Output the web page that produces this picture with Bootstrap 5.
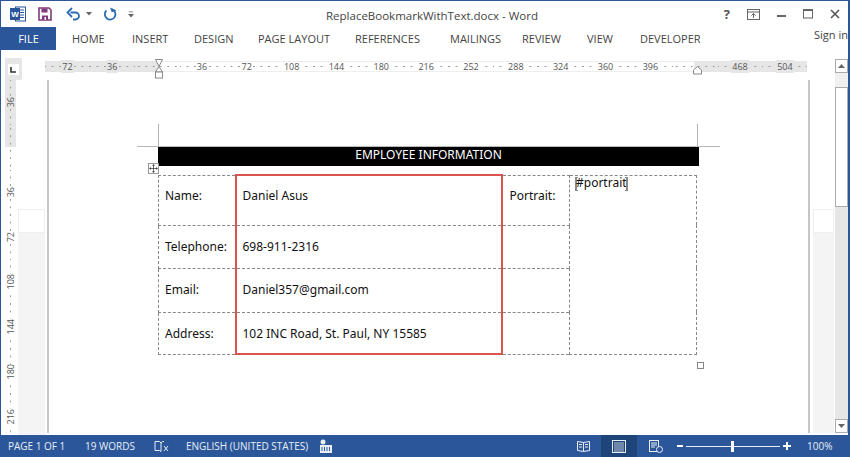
<!DOCTYPE html>
<html lang="en">

<head>
    <meta charset="UTF-8">
    <meta name="viewport" content="width=device-width, initial-scale=1.0">
    <title>ReplaceBookmarkWithText.docx - Word</title>
    <link href="https://cdn.jsdelivr.net/npm/bootstrap@5.3.0/dist/css/bootstrap.min.css" rel="stylesheet">
    <style>
        html, body { height: 100%; overflow: hidden; }

        body {
            background: #fff;
            font-family: "Open Sans", "Liberation Sans", sans-serif;
            color: #444;
        }

        .word-window {
            width: 850px;
            height: 457px;
            border: solid #2b579a;
            border-width: 1px 2px 0 1px;
        }

        /* title bar */
        .title-bar { height: 26px; }
        .qat { width: 160px; padding-left: 9px; }
        .qat-save { margin-left: 12px; }
        .qat-undo { margin-left: 14px; }
        .qat-arrow { margin-left: 5px; }
        .qat-redo { margin-left: 11px; }
        .qat-more { margin-left: 11px; }
        .doc-title { left: 325px; top: 7px; font-size: 11.5px; line-height: 16px; color: #444; }
        .win-btns { right: 8px; top: 6px; gap: 17px; }
        .help-btn { font-size: 13px; line-height: 14px; color: #555; }

        /* ribbon tabs */
        .ribbon-tabs { height: 23px; font-size: 11px; line-height: 23px; overflow: hidden; }
        .tab-file {
            width: 55px;
            flex: none;
            background: #2b579a;
            color: #fff;
            text-align: center;
        }
        .tab-item { color: #444; flex: none; }
        .tab-home { margin-left: 16px; width: 60px; }
        .tab-insert { width: 62px; }
        .tab-design { width: 64px; }
        .tab-layout { width: 97px; }
        .tab-refs { width: 95px; }
        .tab-mail { width: 72px; }
        .tab-review { width: 65px; }
        .tab-view { width: 53px; }
        .tab-dev { width: 174px; }
        .sign-in { font-size: 11px; line-height: 16px; white-space: nowrap; margin-top: 0; flex: none; }

        /* workspace */
        .workspace { height: 385px; }
        .left-col { width: 44px; }
        .corner-btn {
            width: 17px;
            height: 22px;
            margin: 8px 0 0 4px;
            background: #e6e6e6;
            flex: none;
        }
        .corner-btn i {
            width: 11px;
            height: 11px;
            background: #fff;
        }
        .v-wrap { height: 353px; }
        .v-ruler { width: 11px; margin-left: 4px; font-size: 9px; color: #555; }
        .v-strip { width: 27px; margin-left: 2px; }
        .v-strip-top, .r-strip-top { height: 129px; }
        .v-strip-mid, .r-strip-mid { height: 24px; border: 1px solid #eee; background: #fff; }
        .v-strip-rest, .r-strip-rest { flex: 1; background: #f4f4f4; }

        .ruler-h {
            height: 11px;
            margin-top: 11px;
            margin-bottom: 8px;
            font-size: 9px;
            line-height: 11px;
            color: #555;
        }
        .seg { display: flex; height: 11px; }
        .seg-off { background: #e6e6e6; }
        .seg-on { background: #fff; outline: 1px solid #eee; outline-offset: -1px; }
        .cell {
            width: 44.85px;
            flex: none;
            text-align: center;
            background-image: radial-gradient(circle, #9a9a9a 0.5px, transparent 0.9px);
            background-size: 7.475px 11px;
            background-position: center;
        }
        .half { width: 22.42px; background-position: right center; }
        .half-end { width: 22.42px; background-position: left center; }
        .seg-off .cell span { background: #e6e6e6; }
        .seg-on .cell span { background: #fff; }
        .cell span { padding: 0 1px; }
        .indent-left { left: 109px; top: -2px; }
        .indent-right { left: 648px; top: 5px; }

        .v-cell {
            height: 44.85px;
            flex: none;
            display: flex;
            align-items: center;
            justify-content: center;
            background-image: radial-gradient(circle, #9a9a9a 0.5px, transparent 0.9px);
            background-size: 11px 7.475px;
            background-position: center;
        }
        .v-half { height: 22.42px; background-position: center bottom; }
        .v-off { background-color: #e6e6e6; }
        .v-on { background-color: #fff; }
        .v-cell span {
            writing-mode: vertical-rl;
            transform: rotate(180deg);
            line-height: 11px;
            padding: 1px 0;
        }
        .v-off span { background-color: #e6e6e6; }
        .v-on span { background-color: #fff; }

        /* page */
        .page-row { height: 353px; }
        .page {
            width: 763px;
            margin-left: 2px;
            border-left: 2px solid #c6c6c6;
            border-right: 2px solid #c6c6c6;
            background: #fff;
            padding: 66px 0 0 109px;
        }
        .r-strip { width: 21px; margin-left: 3px; }
        .doc-area { width: 541px; }
        .crop { background: #b5b5b5; }
        .crop-v { width: 1px; height: 22px; top: -22px; }
        .crop-h { height: 1px; width: 21px; top: 0; }
        .doc-header {
            height: 20px;
            background: #000;
            color: #fff;
            font-family: "Noto Sans", "Open Sans", sans-serif;
            font-size: 12px;
            line-height: 16px;
            text-align: center;
            border-top: 1px solid #bbb;
        }
        .emp-table {
            width: 539px;
            height: 179px;
            margin-top: 8px;
            table-layout: fixed;
            border-collapse: collapse;
            font-family: "Noto Sans", "Open Sans", sans-serif;
            font-size: 12px;
            color: #111;
        }
        .emp-table td {
            border: 1px dashed #888;
            padding: 0 0 0 6px;
            vertical-align: middle;
            white-space: nowrap;
        }
        .emp-table td.val {
            border-left: 2px solid #d9534f;
            border-right: 2px solid #d9534f;
            padding-left: 6px;
        }
        .emp-table tr:first-child td.val { border-top: 2px solid #d9534f; }
        .emp-table tr:last-child td.val { border-bottom: 2px solid #d9534f; }
        .emp-table tr:first-child td:not(.portrait-cell) { padding-bottom: 9px; }
        .emp-table tr:last-child td { padding-top: 2px; }
        .emp-table td.portrait-cell { vertical-align: top; padding: 0 0 0 5px; line-height: 14px; }
        .emp-table td.portrait-label { padding-left: 7px; }
        .bm {
            display: inline-block;
            width: 3px;
            height: 14px;
            border: 2px solid #8a8a8a;
            border-width: 1px 0 1px 2px;
            vertical-align: -4px;
        }
        .bm-l { margin-right: -2px; }
        .bm-r { border-width: 1px 2px 1px 0; margin-left: -2px; }
        .move-handle {
            left: -10px;
            top: 17px;
            width: 11px;
            height: 11px;
            border: 1px solid #999;
            background: #fff;
        }
        .resize-handle {
            left: 539px;
            top: 216px;
            width: 7px;
            height: 7px;
            border: 1px solid #888;
            background: #fff;
        }

        /* scrollbar */
        .scroll-col { width: 14px; margin-left: 1px; }
        .sb-btn {
            height: 14px;
            background: #fff;
            border: 1px solid #ababab;
            flex: none;
        }
        .sb-up { margin-top: 9px; }
        .sb-gap { height: 14px; background: #f0f0f0; }
        .sb-thumb { height: 120px; background: #fff; border: 1px solid #ababab; }
        .sb-track { flex: 1; background: #e6e6e6; }
        .sb-down { margin-bottom: 2px; }

        /* status bar */
        .status-bar {
            height: 22px;
            background: #2b579a;
            color: #e9eef6;
            font-size: 10px;
            line-height: 22px;
            margin: 0 -2px 0 -1px;
        }
        .st-page { margin-left: 8px; width: 77px; }
        .st-words { width: 69px; }
        .st-lang { margin-left: 17px; width: 133px; }
        .view-active { width: 36px; background: #1e4479; margin: 0 12px 0 11px; }
        .zoom-group { margin-left: 14px; }
        .zoom-line { width: 94px; height: 1px; background: #e9eef6; margin: 0 3px; }
        .zoom-thumb { left: 45px; top: -5px; width: 3px; height: 11px; background: #fff; }
        .st-zoom { margin-left: 16px; width: 43px; }
    </style>
</head>

<body>
    <div class="word-window d-flex flex-column position-relative">
        <!-- title bar -->
        <div class="title-bar d-flex align-items-center position-relative">
            <div class="qat d-flex align-items-center">
                <svg width="16" height="16" viewBox="0 0 16 16">
                    <rect x="5.500" y="1" width="10" height="14" fill="#fff" stroke="#2b579a"/>
                    <path d="M9 4h5M9 6.500h5M9 9h5M9 11.500h5" stroke="#2b579a"/>
                    <rect x="0" y="2" width="10" height="12" fill="#2b579a"/>
                    <text x="5" y="11" font-size="8" font-weight="700" fill="#fff" text-anchor="middle" font-family="Liberation Sans">W</text>
                </svg>
                <svg class="qat-save" width="14" height="14" viewBox="0 0 14 14">
                    <path d="M1 1h10l2 2v10H1z" fill="#fff" stroke="#80397b" stroke-width="1.600"/>
                    <rect x="3.500" y="1.500" width="6" height="4" fill="#80397b"/>
                    <rect x="4" y="8.500" width="6" height="4.500" fill="#80397b"/>
                    <rect x="6.500" y="10" width="1.500" height="3" fill="#fff"/>
                </svg>
                <svg class="qat-undo" width="15" height="14" viewBox="0 0 15 14">
                    <path d="M4.500 5.500h5a3.500 3.500 0 0 1 0 7H7" fill="none" stroke="#2b6cb0" stroke-width="1.800"/>
                    <path d="M6 1 1.500 5.500 6 10" fill="none" stroke="#2b6cb0" stroke-width="1.800"/>
                </svg>
                <svg class="qat-arrow" width="6" height="4" viewBox="0 0 6 4"><path d="M0 0h6L3 3.500z" fill="#666"/></svg>
                <svg class="qat-redo" width="14" height="14" viewBox="0 0 14 14">
                    <path d="M9 2.300A5.300 5.300 0 1 1 3.400 3.500" fill="none" stroke="#2b6cb0" stroke-width="1.800"/>
                    <path d="M8 0v5h5z" fill="#2b6cb0" transform="rotate(-20 9 3)"/>
                </svg>
                <svg class="qat-more" width="6" height="7" viewBox="0 0 7 7"><path d="M1 0h5v1H1zM0 3h7L3.500 7z" fill="#666"/></svg>
            </div>
            <div class="doc-title position-absolute">ReplaceBookmarkWithText.docx - Word</div>
            <div class="win-btns position-absolute d-flex align-items-center">
                <span class="help-btn fw-bold">?</span>
                <svg width="13" height="11" viewBox="0 0 13 11">
                    <rect x=".5" y=".5" width="12" height="10" fill="none" stroke="#666"/>
                    <path d="M.5 3h12M6.500 9V4.500M4.500 6.500l2-2 2 2" fill="none" stroke="#666"/>
                </svg>
                <svg width="9" height="10" viewBox="0 0 9 10"><rect y="6" width="9" height="2" fill="#666"/></svg>
                <svg width="10" height="10" viewBox="0 0 10 10">
                    <rect x=".5" y=".5" width="9" height="8.500" fill="none" stroke="#666"/>
                    <rect x="0" y="0" width="10" height="2" fill="#666"/>
                </svg>
                <svg width="10" height="10" viewBox="0 0 10 10"><path d="M1 1l8 8M9 1 1 9" stroke="#555" stroke-width="1.600"/></svg>
            </div>
        </div>

        <!-- ribbon tabs -->
        <div class="ribbon-tabs d-flex">
            <div class="tab-file">FILE</div>
            <div class="tab-item tab-home">HOME</div>
            <div class="tab-item tab-insert">INSERT</div>
            <div class="tab-item tab-design">DESIGN</div>
            <div class="tab-item tab-layout">PAGE LAYOUT</div>
            <div class="tab-item tab-refs">REFERENCES</div>
            <div class="tab-item tab-mail">MAILINGS</div>
            <div class="tab-item tab-review">REVIEW</div>
            <div class="tab-item tab-view">VIEW</div>
            <div class="tab-item tab-dev">DEVELOPER</div>
            <div class="sign-in">Sign in</div>
        </div>

        <!-- workspace -->
        <div class="workspace d-flex">
            <div class="left-col d-flex flex-column">
                <div class="corner-btn d-flex align-items-center justify-content-center">
                    <i class="d-flex align-items-center justify-content-center">
                        <svg width="7" height="7" viewBox="0 0 7 7"><path d="M1 1v5h5" fill="none" stroke="#333" stroke-width="1.600"/></svg>
                    </i>
                </div>
                <div class="v-wrap d-flex flex-grow-1">
                    <div class="v-ruler d-flex flex-column overflow-hidden">
                        <div class="v-cell v-off"><span>36</span></div>
                        <div class="v-cell v-half v-off"></div>
                        <div class="v-cell v-half v-on"></div>
                        <div class="v-cell v-on"><span>36</span></div>
                        <div class="v-cell v-on"><span>72</span></div>
                        <div class="v-cell v-on"><span>108</span></div>
                        <div class="v-cell v-on"><span>144</span></div>
                        <div class="v-cell v-on"><span>180</span></div>
                        <div class="v-cell v-on"><span>216</span></div>
                    </div>
                    <div class="v-strip d-flex flex-column">
                        <div class="v-strip-top"></div>
                        <div class="v-strip-mid"></div>
                        <div class="v-strip-rest"></div>
                    </div>
                </div>
            </div>

            <div class="flex-grow-1">
                <div class="ruler-h d-flex position-relative">
                    <div class="seg seg-off">
                        <div class="cell"><span>72</span></div>
                        <div class="cell"><span>36</span></div>
                        <div class="cell half-end"></div>
                    </div>
                    <div class="seg seg-on">
                        <div class="cell half"></div>
                        <div class="cell"><span>36</span></div>
                        <div class="cell"><span>72</span></div>
                        <div class="cell"><span>108</span></div>
                        <div class="cell"><span>144</span></div>
                        <div class="cell"><span>180</span></div>
                        <div class="cell"><span>216</span></div>
                        <div class="cell"><span>252</span></div>
                        <div class="cell"><span>288</span></div>
                        <div class="cell"><span>324</span></div>
                        <div class="cell"><span>360</span></div>
                        <div class="cell"><span>396</span></div>
                        <div class="cell half-end"></div>
                    </div>
                    <div class="seg seg-off">
                        <div class="cell half"></div>
                        <div class="cell"><span>468</span></div>
                        <div class="cell"><span>504</span></div>
                    </div>
                    <svg class="indent-left position-absolute" width="10" height="20" viewBox="0 0 10 20">
                        <path d="M1.500.5h7L5 7.500zM5 7.500l3.500 5.500h-7z" fill="#fff" stroke="#888"/>
                        <rect x="1.500" y="13" width="7" height="6" fill="#fff" stroke="#888"/>
                    </svg>
                    <svg class="indent-right position-absolute" width="9" height="9" viewBox="0 0 9 9">
                        <path d="M4.500.5 8.500 4v4h-8V4z" fill="#fff" stroke="#888"/>
                    </svg>
                </div>
                <div class="page-row d-flex">
                    <div class="page">
                        <div class="doc-area position-relative">
                            <div class="crop crop-v position-absolute start-0"></div>
                            <div class="crop crop-h position-absolute" style="left:-21px"></div>
                            <div class="crop crop-v position-absolute" style="left:539px"></div>
                            <div class="crop crop-h position-absolute" style="left:541px"></div>
                            <div class="doc-header">EMPLOYEE INFORMATION</div>
                            <div class="move-handle position-absolute d-flex align-items-center justify-content-center">
                                <svg width="9" height="9" viewBox="0 0 9 9"><path d="M4.500 1v7M1 4.500h7" stroke="#444" stroke-width=".8"/><path d="M4.500 0 6 1.800H3zM4.500 9 6 7.200H3zM0 4.500 1.800 3v3zM9 4.500 7.200 3v3z" fill="#444"/></svg>
                            </div>
                            <table class="emp-table">
                                <colgroup>
                                    <col style="width:77px">
                                    <col style="width:266px">
                                    <col style="width:68px">
                                    <col>
                                </colgroup>
                                <tr style="height:50px">
                                    <td>Name:</td>
                                    <td class="val">Daniel Asus</td>
                                    <td class="portrait-label">Portrait:</td>
                                    <td class="portrait-cell" rowspan="4"><span class="bm bm-l"></span>#portrait<span class="bm bm-r"></span></td>
                                </tr>
                                <tr style="height:43px">
                                    <td>Telephone:</td>
                                    <td class="val">698-911-2316</td>
                                    <td></td>
                                </tr>
                                <tr style="height:44px">
                                    <td>Email:</td>
                                    <td class="val">Daniel357@gmail.com</td>
                                    <td></td>
                                </tr>
                                <tr style="height:42px">
                                    <td>Address:</td>
                                    <td class="val">102 INC Road, St. Paul, NY 15585</td>
                                    <td></td>
                                </tr>
                            </table>
                            <div class="resize-handle position-absolute"></div>
                        </div>
                    </div>
                    <div class="r-strip d-flex flex-column">
                        <div class="r-strip-top"></div>
                        <div class="r-strip-mid"></div>
                        <div class="r-strip-rest"></div>
                    </div>
                </div>
            </div>

            <div class="scroll-col d-flex flex-column">
                <div class="sb-btn sb-up d-flex align-items-center justify-content-center">
                    <svg width="7" height="4" viewBox="0 0 7 4"><path d="M3.500 0 7 4H0z" fill="#666"/></svg>
                </div>
                <div class="sb-gap"></div>
                <div class="sb-thumb"></div>
                <div class="sb-track"></div>
                <div class="sb-btn sb-down d-flex align-items-center justify-content-center">
                    <svg width="7" height="4" viewBox="0 0 7 4"><path d="M3.500 4 7 0H0z" fill="#666"/></svg>
                </div>
            </div>
        </div>

        <!-- status bar -->
        <div class="status-bar d-flex align-items-center">
            <div class="st-page">PAGE 1 OF 1</div>
            <div class="st-words">19 WORDS</div>
            <svg width="15" height="13" viewBox="0 0 15 13">
                <path d="M1 1.500h4.500L7 3v8.500L5.500 10.500H1zM7 3l1.500-1.500H10" fill="none" stroke="#e9eef6"/>
                <path d="M10 6l4 5M14 6l-4 5" stroke="#e9eef6"/>
            </svg>
            <div class="st-lang">ENGLISH (UNITED STATES)</div>
            <svg width="14" height="14" viewBox="0 0 14 14">
                <circle cx="4" cy="3" r="2.500" fill="#e9eef6"/>
                <rect x="1" y="6" width="12" height="8" fill="#e9eef6"/>
                <path d="M3 8v4M5.500 8v4M8 8v4M10.500 8v4" stroke="#2b579a"/>
            </svg>

            <svg class="ms-auto" width="13" height="12" viewBox="0 0 13 12">
                <path d="M.5 1.500 6.500 2.500 12.500 1.500v9l-6 1-6-1zM6.500 2.500v9M2 4.500h3M2 7h3M8 4.500h3M8 7h3" fill="none" stroke="#e9eef6"/>
            </svg>
            <div class="view-active d-flex align-items-center justify-content-center align-self-stretch">
                <svg width="14" height="13" viewBox="0 0 14 13">
                    <rect x=".5" y=".5" width="13" height="12" fill="none" stroke="#e9eef6"/>
                    <path d="M2 3h10M2 5h10M2 7h10M2 9h10M2 11h10" stroke="#e9eef6" stroke-width=".8"/>
                </svg>
            </div>
            <svg width="14" height="13" viewBox="0 0 14 13">
                <rect x=".5" y=".5" width="9" height="11" fill="none" stroke="#e9eef6"/>
                <path d="M2 3h6M2 5h6M2 7h4" stroke="#e9eef6"/>
                <circle cx="10.500" cy="9.500" r="3" fill="#2b579a" stroke="#e9eef6"/>
            </svg>
            <div class="zoom-group d-flex align-items-center">
                <svg width="6" height="2" viewBox="0 0 6 2"><rect width="6" height="2" fill="#fff"/></svg>
                <div class="zoom-line position-relative"><div class="zoom-thumb position-absolute"></div></div>
                <svg width="8" height="8" viewBox="0 0 8 8"><path d="M0 3h8v2H0zM3 0h2v8H3z" fill="#fff"/></svg>
            </div>
            <div class="st-zoom">100%</div>
        </div>
    </div>
    <script src="https://cdn.jsdelivr.net/npm/bootstrap@5.3.0/dist/js/bootstrap.bundle.min.js"></script>
</body>

</html>
